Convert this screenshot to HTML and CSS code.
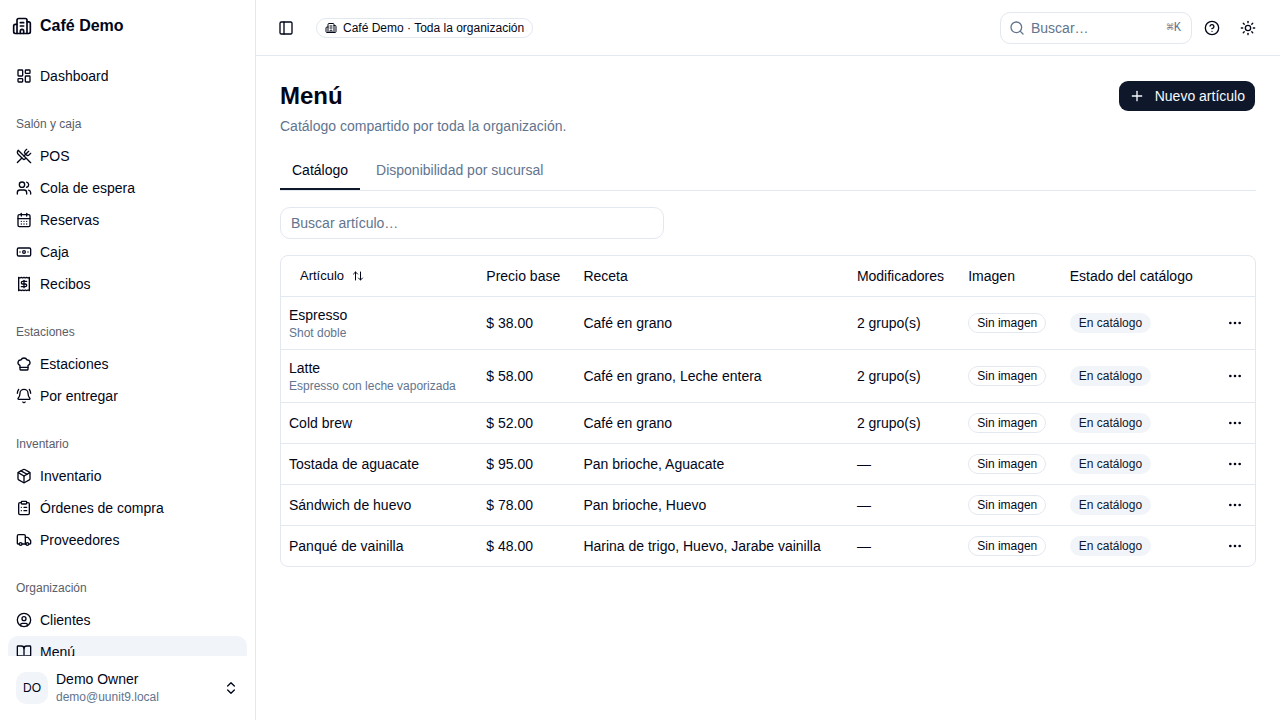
FILE: index.html
```html
<!DOCTYPE html>
<html lang="es">
<head>
<meta charset="utf-8">
<meta name="viewport" content="width=device-width, initial-scale=1">
<title>Menú · Café Demo</title>
<link rel="stylesheet" href="styles.css">
</head>
<body>
<svg class="sprite" aria-hidden="true">
  <symbol id="building" viewBox="0 0 24 24"><path d="M10 12h4"/><path d="M10 8h4"/><path d="M14 21v-3a2 2 0 0 0-4 0v3"/><path d="M6 10H4a2 2 0 0 0-2 2v7a2 2 0 0 0 2 2h16a2 2 0 0 0 2-2V9a2 2 0 0 0-2-2h-2"/><path d="M6 21V5a2 2 0 0 1 2-2h8a2 2 0 0 1 2 2v16"/></symbol>
  <symbol id="dashboard" viewBox="0 0 24 24"><rect width="7" height="9" x="3" y="3" rx="1"/><rect width="7" height="5" x="14" y="3" rx="1"/><rect width="7" height="9" x="14" y="12" rx="1"/><rect width="7" height="5" x="3" y="16" rx="1"/></symbol>
  <symbol id="utensils" viewBox="0 0 24 24"><path d="m16 2-2.3 2.3a3 3 0 0 0 0 4.2l1.8 1.8a3 3 0 0 0 4.2 0L22 8"/><path d="M15 15 3.3 3.3a4.2 4.2 0 0 0 0 6l7.3 7.3c.7.7 2 .7 2.8 0L15 15Zm0 0 7 7"/><path d="m2.1 21.8 6.4-6.3"/><path d="m19 5-7 7"/></symbol>
  <symbol id="users" viewBox="0 0 24 24"><path d="M16 21v-2a4 4 0 0 0-4-4H6a4 4 0 0 0-4 4v2"/><path d="M16 3.128a4 4 0 0 1 0 7.744"/><path d="M22 21v-2a4 4 0 0 0-3-3.87"/><circle cx="9" cy="7" r="4"/></symbol>
  <symbol id="calendar" viewBox="0 0 24 24"><path d="M8 2v4"/><path d="M16 2v4"/><rect width="18" height="18" x="3" y="4" rx="2"/><path d="M3 10h18"/><path d="M8 14h.01"/><path d="M12 14h.01"/><path d="M16 14h.01"/><path d="M8 18h.01"/><path d="M12 18h.01"/><path d="M16 18h.01"/></symbol>
  <symbol id="banknote" viewBox="0 0 24 24"><rect width="20" height="12" x="2" y="6" rx="2"/><circle cx="12" cy="12" r="2"/><path d="M6 12h.01M18 12h.01"/></symbol>
  <symbol id="receipt" viewBox="0 0 24 24"><path d="M4 2v20l2-1 2 1 2-1 2 1 2-1 2 1 2-1 2 1V2l-2 1-2-1-2 1-2-1-2 1-2-1-2 1Z"/><path d="M16 8h-6a2 2 0 1 0 0 4h4a2 2 0 1 1 0 4H8"/><path d="M12 17.5v-11"/></symbol>
  <symbol id="chef" viewBox="0 0 24 24"><path d="M17 21a1 1 0 0 0 1-1v-5.35c0-.457.316-.844.727-1.041a4 4 0 0 0-2.134-7.589 5 5 0 0 0-9.186 0 4 4 0 0 0-2.134 7.588c.411.198.727.585.727 1.041V20a1 1 0 0 0 1 1Z"/><path d="M6 17h12"/></symbol>
  <symbol id="bell" viewBox="0 0 24 24"><path d="M10.268 21a2 2 0 0 0 3.464 0"/><path d="M22 8c0-2.3-.8-4.3-2-6"/><path d="M3.262 15.326A1 1 0 0 0 4 17h16a1 1 0 0 0 .74-1.673C19.41 13.956 18 12.499 18 8A6 6 0 0 0 6 8c0 4.499-1.411 5.956-2.738 7.326"/><path d="M4 2C2.8 3.7 2 5.7 2 8"/></symbol>
  <symbol id="package" viewBox="0 0 24 24"><path d="M11 21.73a2 2 0 0 0 2 0l7-4A2 2 0 0 0 21 16V8a2 2 0 0 0-1-1.73l-7-4a2 2 0 0 0-2 0l-7 4A2 2 0 0 0 3 8v8a2 2 0 0 0 1 1.73z"/><path d="M12 22V12"/><path d="M3.29 7 12 12l8.71-5"/><path d="m7.5 4.27 9 5.15"/></symbol>
  <symbol id="clipboard" viewBox="0 0 24 24"><rect width="8" height="4" x="8" y="2" rx="1"/><path d="M16 4h2a2 2 0 0 1 2 2v14a2 2 0 0 1-2 2H6a2 2 0 0 1-2-2V6a2 2 0 0 1 2-2h2"/><path d="M12 11h4"/><path d="M12 16h4"/><path d="M8 11h.01"/><path d="M8 16h.01"/></symbol>
  <symbol id="truck" viewBox="0 0 24 24"><path d="M14 18V6a2 2 0 0 0-2-2H4a2 2 0 0 0-2 2v11a1 1 0 0 0 1 1h2"/><path d="M15 18H9"/><path d="M19 18h2a1 1 0 0 0 1-1v-3.65a1 1 0 0 0-.22-.624l-3.48-4.35A1 1 0 0 0 17.52 8H14"/><circle cx="17" cy="18" r="2"/><circle cx="7" cy="18" r="2"/></symbol>
  <symbol id="user" viewBox="0 0 24 24"><circle cx="12" cy="12" r="10"/><circle cx="12" cy="10" r="3"/><path d="M7 20.662V19a2 2 0 0 1 2-2h6a2 2 0 0 1 2 2v1.662"/></symbol>
  <symbol id="book" viewBox="0 0 24 24"><path d="M12 7v14"/><path d="M3 18a1 1 0 0 1-1-1V4a1 1 0 0 1 1-1h5a4 4 0 0 1 4 4 4 4 0 0 1 4-4h5a1 1 0 0 1 1 1v13a1 1 0 0 1-1 1h-6a3 3 0 0 0-3 3 3 3 0 0 0-3-3z"/></symbol>
  <symbol id="updown" viewBox="0 0 24 24"><path d="m7 15 5 5 5-5"/><path d="m7 9 5-5 5 5"/></symbol>
  <symbol id="panel" viewBox="0 0 24 24"><rect width="18" height="18" x="3" y="3" rx="2"/><path d="M9 3v18"/></symbol>
  <symbol id="search" viewBox="0 0 24 24"><path d="m21 21-4.34-4.34"/><circle cx="11" cy="11" r="8"/></symbol>
  <symbol id="help" viewBox="0 0 24 24"><circle cx="12" cy="12" r="10"/><path d="M9.09 9a3 3 0 0 1 5.83 1c0 2-3 3-3 3"/><path d="M12 17h.01"/></symbol>
  <symbol id="sun" viewBox="0 0 24 24"><circle cx="12" cy="12" r="4"/><path d="M12 2v2"/><path d="M12 20v2"/><path d="m4.93 4.93 1.41 1.41"/><path d="m17.66 17.66 1.41 1.41"/><path d="M2 12h2"/><path d="M20 12h2"/><path d="m6.34 17.66-1.41 1.41"/><path d="m19.07 4.93-1.41 1.41"/></symbol>
  <symbol id="plus" viewBox="0 0 24 24"><path d="M5 12h14"/><path d="M12 5v14"/></symbol>
  <symbol id="sort" viewBox="0 0 24 24"><path d="m21 16-4 4-4-4"/><path d="M17 20V4"/><path d="m3 8 4-4 4 4"/><path d="M7 4v16"/></symbol>
  <symbol id="dots" viewBox="0 0 24 24"><circle cx="12" cy="12" r="1"/><circle cx="19" cy="12" r="1"/><circle cx="5" cy="12" r="1"/></symbol>
</svg>

<div class="app">
  <aside class="sidebar">
    <a class="brand" href="#"><svg class="icon icon-lg"><use href="#building"/></svg>Café Demo</a>
    <nav class="nav" aria-label="Principal">
      <div class="nav-group">
        <a class="nav-item" href="#"><svg class="icon"><use href="#dashboard"/></svg>Dashboard</a>
      </div>
      <div class="nav-group">
        <div class="nav-label">Salón y caja</div>
        <a class="nav-item" href="#"><svg class="icon"><use href="#utensils"/></svg>POS</a>
        <a class="nav-item" href="#"><svg class="icon"><use href="#users"/></svg>Cola de espera</a>
        <a class="nav-item" href="#"><svg class="icon"><use href="#calendar"/></svg>Reservas</a>
        <a class="nav-item" href="#"><svg class="icon"><use href="#banknote"/></svg>Caja</a>
        <a class="nav-item" href="#"><svg class="icon"><use href="#receipt"/></svg>Recibos</a>
      </div>
      <div class="nav-group">
        <div class="nav-label">Estaciones</div>
        <a class="nav-item" href="#"><svg class="icon"><use href="#chef"/></svg>Estaciones</a>
        <a class="nav-item" href="#"><svg class="icon"><use href="#bell"/></svg>Por entregar</a>
      </div>
      <div class="nav-group">
        <div class="nav-label">Inventario</div>
        <a class="nav-item" href="#"><svg class="icon"><use href="#package"/></svg>Inventario</a>
        <a class="nav-item" href="#"><svg class="icon"><use href="#clipboard"/></svg>Órdenes de compra</a>
        <a class="nav-item" href="#"><svg class="icon"><use href="#truck"/></svg>Proveedores</a>
      </div>
      <div class="nav-group">
        <div class="nav-label">Organización</div>
        <a class="nav-item" href="#"><svg class="icon"><use href="#user"/></svg>Clientes</a>
        <a class="nav-item active" href="#" aria-current="page"><svg class="icon"><use href="#book"/></svg>Menú</a>
      </div>
    </nav>
    <div class="sidebar-footer">
      <button class="account" type="button">
        <span class="avatar">DO</span>
        <span class="account-text"><span class="account-name">Demo Owner</span><span class="small muted">demo@uunit9.local</span></span>
        <svg class="icon"><use href="#updown"/></svg>
      </button>
    </div>
  </aside>

  <div class="page">
    <header class="topbar">
      <button class="icon-button compact" type="button" aria-label="Alternar barra lateral"><svg class="icon"><use href="#panel"/></svg></button>
      <span class="badge scope"><svg class="icon icon-sm"><use href="#building"/></svg>Café Demo · Toda la organización</span>
      <div class="tools">
        <button class="search" type="button"><svg class="icon"><use href="#search"/></svg><span class="search-text">Buscar…</span><kbd class="shortcut">⌘K</kbd></button>
        <button class="icon-button" type="button" aria-label="Ayuda"><svg class="icon"><use href="#help"/></svg></button>
        <button class="icon-button" type="button" aria-label="Cambiar tema"><svg class="icon"><use href="#sun"/></svg></button>
      </div>
    </header>

    <main class="content">
      <div class="heading">
        <div class="heading-text">
          <h1 class="title">Menú</h1>
          <p class="subtitle muted">Catálogo compartido por toda la organización.</p>
        </div>
        <button class="primary" type="button"><svg class="icon"><use href="#plus"/></svg>Nuevo artículo</button>
      </div>

      <div class="tabs" role="tablist">
        <button class="tab selected" type="button" role="tab" aria-selected="true">Catálogo</button>
        <button class="tab" type="button" role="tab" aria-selected="false">Disponibilidad por sucursal</button>
      </div>

      <input class="filter" type="search" placeholder="Buscar artículo…" aria-label="Buscar artículo">

      <div class="table-card">
        <table class="table">
          <thead>
            <tr><th><button class="sort" type="button">Artículo<svg class="icon icon-sm"><use href="#sort"/></svg></button></th><th>Precio base</th><th>Receta</th><th>Modificadores</th><th>Imagen</th><th>Estado del catálogo</th><th></th></tr>
          </thead>
          <tbody>
            <tr><td>Espresso<div class="small muted">Shot doble</div></td><td>$ 38.00</td><td>Café en grano</td><td>2 grupo(s)</td><td><span class="badge">Sin imagen</span></td><td><span class="badge soft">En catálogo</span></td><td class="actions"><button class="row-menu" type="button" aria-label="Acciones de Espresso"><svg class="icon"><use href="#dots"/></svg></button></td></tr>
            <tr><td>Latte<div class="small muted">Espresso con leche vaporizada</div></td><td>$ 58.00</td><td>Café en grano, Leche entera</td><td>2 grupo(s)</td><td><span class="badge">Sin imagen</span></td><td><span class="badge soft">En catálogo</span></td><td class="actions"><button class="row-menu" type="button" aria-label="Acciones de Latte"><svg class="icon"><use href="#dots"/></svg></button></td></tr>
            <tr><td>Cold brew</td><td>$ 52.00</td><td>Café en grano</td><td>2 grupo(s)</td><td><span class="badge">Sin imagen</span></td><td><span class="badge soft">En catálogo</span></td><td class="actions"><button class="row-menu" type="button" aria-label="Acciones de Cold brew"><svg class="icon"><use href="#dots"/></svg></button></td></tr>
            <tr><td>Tostada de aguacate</td><td>$ 95.00</td><td>Pan brioche, Aguacate</td><td>—</td><td><span class="badge">Sin imagen</span></td><td><span class="badge soft">En catálogo</span></td><td class="actions"><button class="row-menu" type="button" aria-label="Acciones de Tostada de aguacate"><svg class="icon"><use href="#dots"/></svg></button></td></tr>
            <tr><td>Sándwich de huevo</td><td>$ 78.00</td><td>Pan brioche, Huevo</td><td>—</td><td><span class="badge">Sin imagen</span></td><td><span class="badge soft">En catálogo</span></td><td class="actions"><button class="row-menu" type="button" aria-label="Acciones de Sándwich de huevo"><svg class="icon"><use href="#dots"/></svg></button></td></tr>
            <tr><td>Panqué de vainilla</td><td>$ 48.00</td><td>Harina de trigo, Huevo, Jarabe vainilla</td><td>—</td><td><span class="badge">Sin imagen</span></td><td><span class="badge soft">En catálogo</span></td><td class="actions"><button class="row-menu" type="button" aria-label="Acciones de Panqué de vainilla"><svg class="icon"><use href="#dots"/></svg></button></td></tr>
          </tbody>
        </table>
      </div>
    </main>
  </div>
</div>
</body>
</html>
```
FILE: styles.css
```css
:root {
  --text: #020618;
  --muted: #62748e;
  --border: #e2e8f0;
  --soft: #f1f5f9;
  --primary: #0f172b;
}

* { box-sizing: border-box; }

body {
  margin: 0;
  background: #fff;
  color: var(--text);
  font: 14px/20px "Liberation Sans", Arial, sans-serif;
}

button {
  border: 0;
  padding: 0;
  background: none;
  color: inherit;
  font: inherit;
  text-align: left;
  cursor: pointer;
}

a { color: inherit; text-decoration: none; }

.sprite { display: none; }

.icon {
  width: 16px;
  height: 16px;
  flex: none;
  fill: none;
  stroke: currentColor;
  stroke-width: 2;
  stroke-linecap: round;
  stroke-linejoin: round;
}
.icon-sm { width: 12px; height: 12px; }
.icon-lg { width: 20px; height: 20px; }

.muted { color: var(--muted); }
.small { font-size: 12px; line-height: 16px; }

.app { display: flex; height: 100vh; }

/* Sidebar */
.sidebar {
  display: flex;
  flex-direction: column;
  width: 256px;
  flex: none;
  border-right: 1px solid var(--border);
}
.brand {
  display: flex;
  align-items: center;
  gap: 8px;
  padding: 14px 12px;
  font-size: 16px;
  line-height: 24px;
  font-weight: 600;
}
.nav { flex: 1; min-height: 0; overflow-y: auto; scrollbar-width: none; }
.nav-group { padding: 8px; }
.nav-label {
  padding: 8px;
  font-size: 12px;
  line-height: 16px;
  color: #5a5d69;
}
.nav-item {
  display: flex;
  align-items: center;
  gap: 8px;
  padding: 6px 8px;
  border-radius: 10px;
}
.nav-item.active { background: var(--soft); }
.sidebar-footer { padding: 8px; }
.account {
  display: flex;
  align-items: center;
  gap: 8px;
  width: 100%;
  height: 48px;
  padding: 0 8px;
}
.avatar {
  display: grid;
  place-items: center;
  width: 32px;
  height: 32px;
  border-radius: 10px;
  background: var(--soft);
  font-size: 12px;
}
.account-text { display: flex; flex-direction: column; flex: 1; padding-bottom: 2px; }

/* Top bar */
.page { display: flex; flex-direction: column; flex: 1; min-width: 0; }
.topbar {
  display: flex;
  align-items: center;
  gap: 16px;
  padding: 12px 16px 11px;
  border-bottom: 1px solid var(--border);
}
.tools { display: flex; align-items: center; gap: 4px; margin-left: auto; }
.icon-button { display: grid; place-items: center; width: 32px; height: 32px; }
.icon-button.compact { width: 28px; height: 28px; }
.search {
  display: flex;
  align-items: center;
  gap: 6px;
  width: 192px;
  height: 32px;
  padding: 0 10px 0 8px;
  border: 1px solid var(--border);
  border-radius: 10px;
  color: var(--muted);
}
.search-text { flex: 1; }
.shortcut { font: 12px/16px "Liberation Mono", monospace; }

.badge {
  display: inline-flex;
  align-items: center;
  gap: 6px;
  height: 20px;
  padding: 0 8px;
  border: 1px solid var(--border);
  border-radius: 10px;
  font-size: 12px;
  line-height: 16px;
  white-space: nowrap;
  vertical-align: middle;
}
.badge.soft { border-color: transparent; background: var(--soft); color: var(--primary); }

/* Content */
.content {
  display: flex;
  flex-direction: column;
  gap: 16px;
  padding: 24px;
  overflow: auto;
}
.heading { display: flex; align-items: flex-start; justify-content: space-between; }
.heading-text { display: flex; flex-direction: column; gap: 4px; }
.title { margin: 0; font-size: 24px; line-height: 32px; font-weight: 600; }
.subtitle { margin: 0; }
.primary {
  display: flex;
  align-items: center;
  gap: 10px;
  height: 32px;
  padding: 0 10px;
  border: 1px solid transparent;
  border-radius: 10px;
  background: var(--primary) padding-box;
  color: #f8fafc;
}

.tabs { display: flex; gap: 4px; border-bottom: 1px solid var(--border); }
.tab { padding: 8px 12px; border-bottom: 2px solid transparent; color: var(--muted); }
.tab.selected { border-color: var(--primary); color: var(--text); }

.filter {
  width: 100%;
  max-width: 384px;
  height: 32px;
  padding: 0 10px;
  border: 1px solid var(--border);
  border-radius: 10px;
  background: none;
  color: inherit;
  font: inherit;
  appearance: none;
}
.filter::placeholder { color: var(--muted); opacity: 1; }

.table-card { border: 1px solid var(--border); border-radius: 8px; overflow: hidden; }
.table { width: 100%; border-collapse: collapse; }
.table th, .table td { padding: 8px; text-align: left; vertical-align: middle; white-space: nowrap; }
.table th { height: 40px; padding: 0 8px; font-weight: 400; }
.table tr { border-bottom: 1px solid var(--border); }
.table tbody tr:last-child { border-bottom: 0; }
.sort {
  display: inline-flex;
  align-items: center;
  gap: 8px;
  height: 28px;
  padding: 0 11px;
  font-size: 13px;
  vertical-align: middle;
}
.table .actions { text-align: right; }
.row-menu { display: inline-grid; place-items: center; width: 24px; height: 24px; vertical-align: middle; }
```
